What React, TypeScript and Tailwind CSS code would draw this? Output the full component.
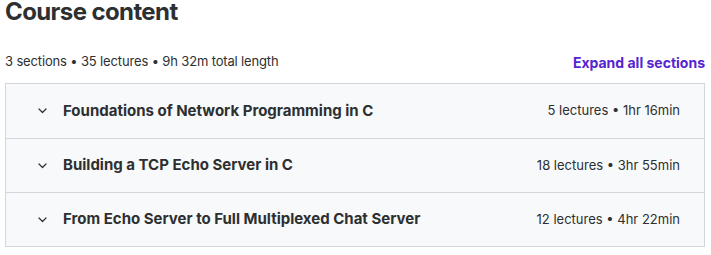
import React from 'react';

type Section = { title: string; lectures: number; length: string };

const sections: Section[] = [
  { title: 'Foundations of Network Programming in C', lectures: 5, length: '1hr 16min' },
  { title: 'Building a TCP Echo Server in C', lectures: 18, length: '3hr 55min' },
  { title: 'From Echo Server to Full Multiplexed Chat Server', lectures: 12, length: '4hr 22min' },
];

const Chevron = () => (
  <svg width="9" height="6" viewBox="0 0 9 6" fill="none" className="shrink-0">
    <path d="M1 1l3.5 3.5L8 1" stroke="#2d2f31" strokeWidth="1.2" strokeLinecap="round" strokeLinejoin="round" />
  </svg>
);

export default function App() {
  return (
    <div className="w-[711px] h-[255px] bg-white px-[5px] text-[#2d2f31]" style={{ fontFamily: 'Inter, "Noto Sans", sans-serif' }}>
      <h2 className="text-[24px] leading-[24px] font-bold tracking-[-0.6px]">Course content</h2>
      <div className="flex items-center justify-between mt-[30px] h-[16px] w-[700px]">
        <span className="text-[13px] tracking-[-0.15px]">3 sections • 35 lectures • 9h 32m total length</span>
        <button className="text-[14px] font-bold text-[#5624d0]">Expand all sections</button>
      </div>
      <div className="mt-[13px] w-[700px] border border-[#d1d7dc] bg-[#f7f9fa]">
        {sections.map((s, i) => (
          <div
            key={s.title}
            className={`flex items-center justify-between h-[54px] pl-[32px] pr-[24px] ${i > 0 ? 'border-t border-[#d1d7dc]' : ''}`}
          >
            <div className="flex items-center gap-[16px]">
              <Chevron />
              <span className="text-[15px] font-bold">{s.title}</span>
            </div>
            <span className="text-[13px]">
              {s.lectures} lectures • {s.length}
            </span>
          </div>
        ))}
      </div>
    </div>
  );
}
